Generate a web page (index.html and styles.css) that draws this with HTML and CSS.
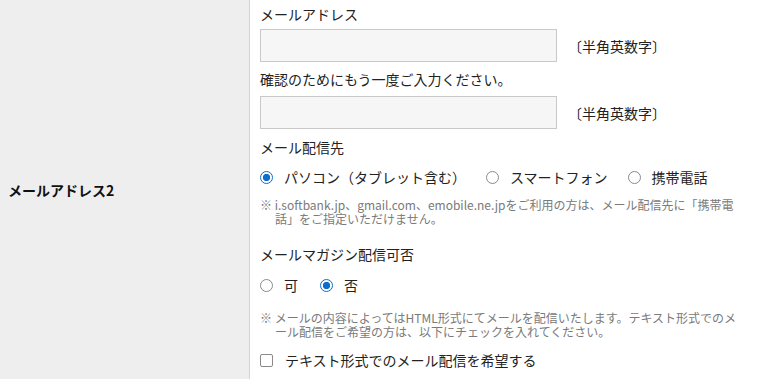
FILE: index.html
```html
<!DOCTYPE html>
<html lang="ja">
<head>
<meta charset="utf-8">
<link rel="stylesheet" href="styles.css">
</head>
<body>
<div class="row">
  <div class="head">メールアドレス2</div>
  <div class="cell">
    <div class="label l1">メールアドレス</div>
    <div class="field f1"><input class="box" type="text"><span class="hint">〔半角英数字〕</span></div>
    <div class="label l2">確認のためにもう一度ご入力ください。</div>
    <div class="field f2"><input class="box" type="text"><span class="hint">〔半角英数字〕</span></div>
    <div class="label l3">メール配信先</div>
    <div class="choices c1">
      <label class="opt"><input type="radio" name="dest" checked><span>パソコン（タブレット含む）</span></label>
      <label class="opt"><input type="radio" name="dest"><span>スマートフォン</span></label>
      <label class="opt"><input type="radio" name="dest"><span>携帯電話</span></label>
    </div>
    <p class="note n1">※ i.softbank.jp、gmail.com、emobile.ne.jpをご利用の方は、メール配信先に「携帯電<br>話」をご指定いただけません。</p>
    <div class="label l4">メールマガジン配信可否</div>
    <div class="choices c2">
      <label class="opt"><input type="radio" name="mag"><span>可</span></label>
      <label class="opt"><input type="radio" name="mag" checked><span>否</span></label>
    </div>
    <p class="note n2">※ メールの内容によってはHTML形式にてメールを配信いたします。テキスト形式でのメ<br>ール配信をご希望の方は、以下にチェックを入れてください。</p>
    <label class="check"><input type="checkbox"><span>テキスト形式でのメール配信を希望する</span></label>
  </div>
</div>
</body>
</html>
```
FILE: styles.css
```css
html, body {
  margin: 0;
  padding: 0;
  background: #fff;
}
body {
  font-family: "Noto Sans CJK JP", "Noto Sans", sans-serif;
  font-size: 14px;
  color: #222;
  width: 762px;
  height: 379px;
  overflow: hidden;
}
.row {
  display: flex;
  height: 379px;
}
.head {
  width: 250px;
  box-sizing: border-box;
  background: #eeeeee;
  border-right: 1px solid #d4d4d4;
  display: flex;
  align-items: center;
  padding-left: 8px;
  font-weight: bold;
  font-size: 14px;
  color: #111;
}
.cell {
  flex: 1;
  padding-left: 10px;
  display: flex;
  flex-direction: column;
  align-items: flex-start;
}
.label {
  line-height: 20px;
  height: 20px;
}
.l1 { margin-top: 4px; }
.l2 { margin-top: 7px; }
.l3 { margin-top: 8px; }
.l4 { margin-top: 18px; }
.field {
  display: flex;
  align-items: center;
  height: 33px;
}
.f1 { margin-top: 5px; }
.f2 { margin-top: 7px; }
.box {
  width: 297px;
  height: 33px;
  box-sizing: border-box;
  border: 1px solid #c9c9c9;
  background: #f6f6f6;
  margin: 0;
  padding: 0 6px;
  font: inherit;
}
.hint {
  margin-left: 11px;
  color: #222;
}
.choices {
  display: flex;
  align-items: center;
  height: 20px;
}
.c1 { margin-top: 10px; }
.c2 { margin-top: 11px; }
.opt {
  display: flex;
  align-items: center;
  margin-right: 20px;
  line-height: 20px;
}
.opt input {
  appearance: none;
  -webkit-appearance: none;
  width: 13px;
  height: 13px;
  margin: 0 11px 0 0;
  border: 1px solid #8a8a8a;
  border-radius: 50%;
  box-sizing: border-box;
  background: #fff;
}
.opt input:checked {
  border: 1px solid #0a6fd0;
  background: radial-gradient(circle, #0a6fd0 0 3.4px, #fff 3.9px);
}
.c2 .opt { margin-right: 22px; }
.note {
  margin: 0;
  font-size: 12px;
  line-height: 14px;
  color: #7a7a7a;
  padding-left: 15px;
  text-indent: -15px;
  white-space: nowrap;
}
.n1 { margin-top: 11px; }
.n2 { margin-top: 16px; }
.check {
  display: flex;
  align-items: center;
  margin-top: 11px;
  line-height: 20px;
}
.check input {
  appearance: none;
  -webkit-appearance: none;
  width: 13px;
  height: 13px;
  margin: 0 12px 0 0;
  border: 1px solid #8a8a8a;
  border-radius: 2px;
  box-sizing: border-box;
  background: #fff;
}
```
